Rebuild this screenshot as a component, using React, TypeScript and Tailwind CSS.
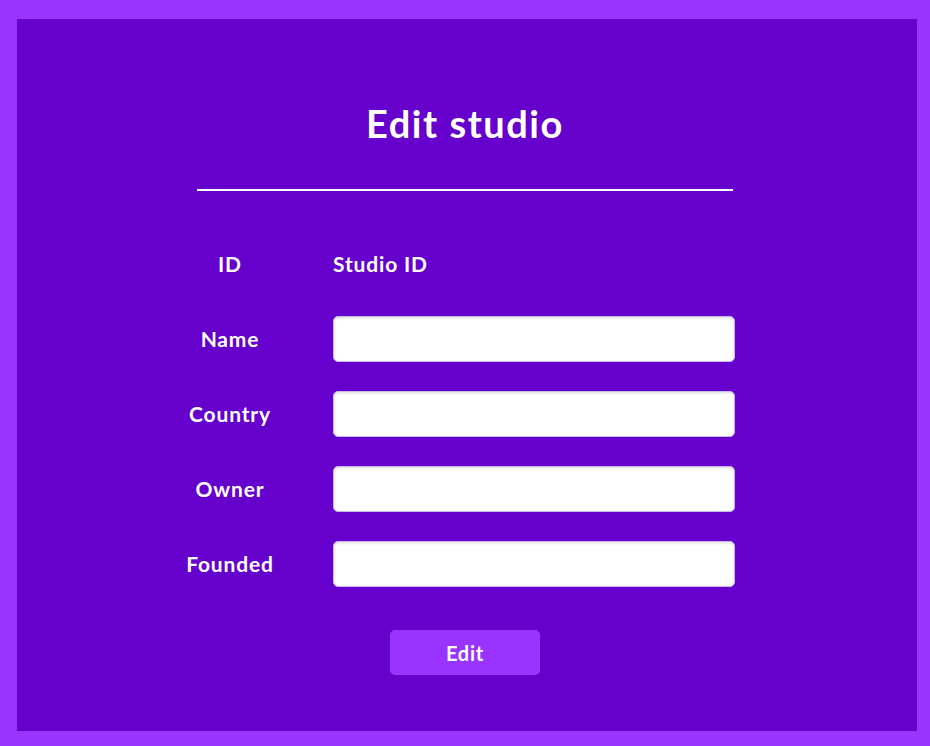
import React from "react";

const fields = ["Name", "Country", "Owner", "Founded"];

export default function App() {
    return (
        <div className="min-h-[746px] bg-[#9933ff] pt-[19px] pl-[17px] pr-[13px] pb-[15px] font-['Lato',sans-serif] text-white">
            <div className="h-[712px] bg-[#6600cc] pt-[79px] pr-[4px]">
                {/* Title */}
                <h1 className="text-center text-[38px] font-bold leading-[50px] tracking-[0.04em]">Edit studio</h1>
                <div className="w-[536px] ml-[180px] mt-[41px] border-t-2 border-white" />

                <div className="w-[538px] ml-[180px] mt-[50px]">
                    {/* ID row */}
                    <div className="flex items-center h-[46px]">
                        <div className="w-[66px] flex justify-center whitespace-nowrap text-[21px] font-bold tracking-[0.04em]">ID</div>
                        <div className="ml-[70px] text-[21px] font-bold tracking-[0.04em]">Studio ID</div>
                    </div>

                    {fields.map((f) => (
                        <div key={f} className="flex items-center mt-[29px] h-[46px]">
                            <div className="w-[66px] flex justify-center whitespace-nowrap text-[21px] font-bold tracking-[0.04em]">{f}</div>
                            <input
                                type="text"
                                className="ml-[70px] w-[402px] h-[46px] bg-white rounded-[5px] border border-[#c9b8e8] shadow-[inset_0_1px_3px_rgba(0,0,0,0.15)] outline-none px-3 text-black"
                            />
                        </div>
                    ))}
                </div>

                <div className="flex justify-center mt-[43px]">
                    <button className="w-[150px] h-[45px] rounded-[5px] bg-[#9933ff] text-white text-[20px] font-bold tracking-[0.04em]">
                        Edit
                    </button>
                </div>
            </div>
        </div>
    );
}
